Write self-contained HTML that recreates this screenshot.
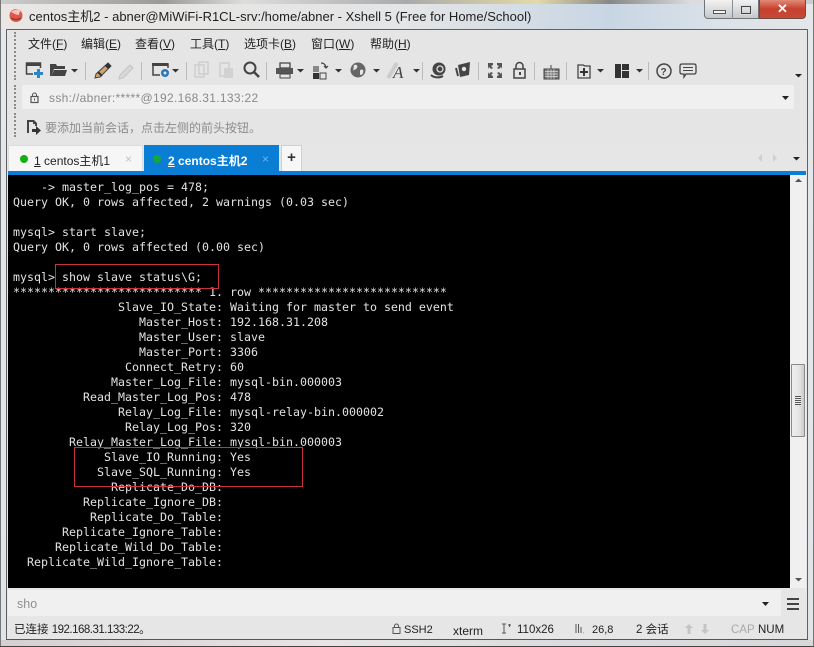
<!DOCTYPE html>
<html><head><meta charset="utf-8">
<style>
html,body{margin:0;padding:0;background:#d8dde2}
#w{position:relative;width:814px;height:647px;overflow:hidden;font-family:"Liberation Sans","Noto Sans CJK SC",sans-serif;color:#222;
background:linear-gradient(180deg,#d9dcdf 0,#e4e8ec 28px,#dfe4e9 100%)}
.a{position:absolute;white-space:nowrap}
pre{position:absolute;left:13px;top:180px;margin:0;font:11.63px/15px "DejaVu Sans Mono","Liberation Mono",monospace;color:#e2e2e2}
.m{font-size:12px;top:35px;color:#222}
.tb{position:absolute;left:0;top:0}
u{text-decoration:underline}
</style></head><body>
<div id="w">
<!-- glass title -->
<div class="a" style="left:0;top:0;width:814px;height:4px;background:linear-gradient(90deg,#ccc,#999 20%,#ddd 30%,#aaa 50%,#e4d9a8 66%,#888 75%,#ddd 85%,#ccc)"></div>
<div class="a" style="left:0;top:4px;width:814px;height:25px;background:linear-gradient(90deg,#e9e6e4,#e4e5e6 50%,#c8d6e4 75%,#dde3e8 90%,#e4e6e8)"></div>
<svg class="tb" width="30" height="30" style="left:8px;top:7px"><circle cx="8" cy="8.5" r="6.5" fill="#d9594c"/><path d="M3 5c3-3 8-3 11-2-2 1-3 3-3 5-3 0-6-2-8-3z" fill="#f4c4b8"/><path d="M3 11c3 2 7 2 10 0" stroke="#a9352c" stroke-width="1.5" fill="none"/></svg>
<div class="a" style="left:29px;top:6px;font-size:13px;color:#222">centos主机2 - abner@MiWiFi-R1CL-srv:/home/abner - Xshell 5 (Free for Home/School)</div>
<!-- window controls -->
<div class="a" style="left:704px;top:0;width:55px;height:19px;background:linear-gradient(#f2f2f2,#c4c8cc);border:1px solid #6f7478;border-top:0;border-radius:0 0 0 4px;box-sizing:border-box"></div>
<div class="a" style="left:732px;top:0;width:1px;height:19px;background:#8a8f94"></div>
<div class="a" style="left:713px;top:10px;width:11px;height:3px;background:#f4f4f4;border:1px solid #555;box-sizing:content-box;height:2px"></div>
<div class="a" style="left:741px;top:6px;width:8px;height:6px;border:1px solid #444;outline:1px solid #ddd"></div>
<div class="a" style="left:759px;top:0;width:47px;height:19px;background:linear-gradient(#e08a78,#c8402c 50%,#c44a38);border:1px solid #6f4a44;border-top:0;border-radius:0 0 4px 0;box-sizing:border-box;text-align:center;color:#fff;font:bold 13px/17px 'Liberation Sans',sans-serif">✕</div>

<!-- inner frame -->
<div class="a" style="left:6px;top:29px;width:802px;height:611px;background:#e5e5e5;border:1px solid #5e6266;border-bottom:1px solid #555;box-sizing:border-box;border-radius:1px"></div>
<div class="a" style="left:7px;top:30px;width:800px;height:115px;background:#e5e5e5"></div>
<!-- grips -->
<div class="a" style="left:14px;top:32px;height:48px;border-left:2px dotted #8a8a8a"></div>
<div class="a" style="left:14px;top:85px;height:24px;border-left:2px dotted #8a8a8a"></div>
<div class="a" style="left:14px;top:113px;height:24px;border-left:2px dotted #8a8a8a"></div>
<!-- menu -->
<div class="a m" style="left:28px">文件(<u>F</u>)</div>
<div class="a m" style="left:81px">编辑(<u>E</u>)</div>
<div class="a m" style="left:135px">查看(<u>V</u>)</div>
<div class="a m" style="left:190px">工具(<u>T</u>)</div>
<div class="a m" style="left:244px">选项卡(<u>B</u>)</div>
<div class="a m" style="left:311px">窗口(<u>W</u>)</div>
<div class="a m" style="left:370px">帮助(<u>H</u>)</div>
<!-- toolbar -->
<svg class="tb" width="814" height="30" viewBox="0 56 814 30" style="top:56px">
<g fill="#333">
<path d="M33 74h-6.500v-11h14v5" fill="none" stroke="#444" stroke-width="1.500"/><rect x="26" y="63" width="15" height="3" fill="#444"/><path d="M37 69h3v3h3v3h-3v3h-3v-3h-3v-3h3z" fill="#2a87c4"/>
<path d="M50 64h6l1 2h8v3H54l-3 7h-1zM54 70h13l-2 6H51z" fill="#444"/>
<path d="M71 69h7l-3.500 3.500z"/>
<path d="M172 69h7l-3.500 3.500zM297 69h7l-3.500 3.500zM335 69h7l-3.500 3.500zM373 69h7l-3.500 3.500zM413 69h7l-3.500 3.500zM597 69h7l-3.500 3.500zM636 69h7l-3.500 3.500z"/>
</g>
<g fill="#bbb"><rect x="85" y="62" width="1" height="18"/><rect x="141" y="62" width="1" height="18"/><rect x="186" y="62" width="1" height="18"/><rect x="266" y="62" width="1" height="18"/><rect x="422" y="62" width="1" height="18"/><rect x="478" y="62" width="1" height="18"/><rect x="534" y="62" width="1" height="18"/><rect x="566" y="62" width="1" height="18"/><rect x="648" y="62" width="1" height="18"/></g>
<!-- pencil -->
<path d="M96 74l12-11 3 3-11 11-5 1z" fill="#d4a36c" stroke="#444"/><path d="M105 66l3-3 3 3-3 3z" fill="#333"/><path d="M98 72l4 4" stroke="#333" stroke-width="2"/>
<path d="M120 75l10-10 3 3-10 10-4 1z" fill="#d8d8d8" stroke="#c4c4c4"/>
<!-- session props -->
<path d="M160 75h-7V64h15v4" fill="none" stroke="#444" stroke-width="1.500"/><rect x="152" y="63" width="16" height="3" fill="#444"/><circle cx="165" cy="73" r="4" fill="#2a78b8"/><circle cx="165" cy="73" r="1.500" fill="#e5e5e5"/>
<!-- copy/paste disabled -->
<g fill="none" stroke="#cfcfcf" stroke-width="1.500"><rect x="195" y="65" width="9" height="12"/><rect x="199" y="62" width="9" height="12"/><rect x="220" y="63" width="9" height="13"/></g><rect x="224" y="68" width="9" height="10" fill="#d2d2d2"/>
<!-- search -->
<circle cx="250" cy="68" r="5.500" fill="none" stroke="#444" stroke-width="2"/><path d="M254 72l5 5" stroke="#444" stroke-width="2.500"/>
<!-- print -->
<path d="M280 63h10v5h-10z" fill="none" stroke="#444" stroke-width="1.300"/><rect x="276" y="68" width="17" height="6" fill="#555"/><path d="M280 74h10v4h-10z" fill="#e5e5e5" stroke="#444"/>
<!-- transfer -->
<rect x="313" y="66" width="6" height="6" fill="#888"/><rect x="313" y="73" width="6" height="6" fill="#333"/><rect x="320" y="73" width="6" height="6" fill="none" stroke="#444"/><path d="M321 63c3 0 5 2 5 5M324 66l2 2 2-2" fill="none" stroke="#444" stroke-width="1.200"/>
<!-- globe -->
<circle cx="358" cy="70" r="7.500" fill="#666"/><path d="M354 65c3-1 4 1 3 3s-3 1-4 3zM360 70c3-1 4 0 3 3s-3 2-3 1z" fill="#e5e5e5"/>
<!-- font A -->
<path d="M388 78l9-15" stroke="#ccc" stroke-width="4"/>
<text x="393" y="78" font-family="Liberation Serif" font-style="italic" font-size="17" fill="#444">A</text>
<!-- xftp shell / tunnel -->
<circle cx="439" cy="69" r="6.500" fill="#444"/><circle cx="440" cy="69" r="3" fill="none" stroke="#ddd" stroke-width="1.300"/><path d="M431 75c3 3 9 3 12 1" stroke="#444" stroke-width="2" fill="none"/>
<path d="M458 65l12-3-1 13-9 2z" fill="#444"/><circle cx="464" cy="69" r="2.200" fill="#e5e5e5"/><path d="M456 68l2 8" stroke="#444" stroke-width="2"/>
<!-- fullscreen -->
<g fill="#555"><path d="M488 63h5v2l-2 1 2 2-2 1-2-2-1 2zM502 63h-5v2l2 1-2 2 2 1 2-2 1 2zM488 78h5v-2l-2-1 2-2-2-1-2 2-1-2zM502 78h-5v-2l2-1-2-2 2-1 2 2 1-2z"/></g>
<!-- lock -->
<rect x="514" y="69" width="11" height="9" fill="none" stroke="#444" stroke-width="1.500"/><path d="M516 69v-3a3.500 3.500 0 0 1 7 0v3" fill="none" stroke="#444" stroke-width="1.500"/><rect x="519" y="72" width="2" height="3" fill="#444"/>
<!-- keyboard -->
<rect x="544" y="69" width="15" height="10" fill="#777" stroke="#444"/><path d="M545 71.500h13M545 74h13M545 76.500h13M548 69v10M551 69v10M554 69v10" stroke="#ddd" stroke-width=".7"/><path d="M551 69v-4" stroke="#444"/>
<!-- new tab group -->
<path d="M578 65h5l2 1h5v12h-12z" fill="none" stroke="#444" stroke-width="1.300"/><path d="M583 68h2v3h3v2h-3v3h-2v-3h-3v-2h3z" fill="#333"/>
<!-- layout -->
<rect x="615" y="64" width="6" height="14" fill="#333"/><rect x="622" y="64" width="7" height="6" fill="#333"/><rect x="622" y="71" width="7" height="7" fill="#333"/>
<!-- help -->
<circle cx="664" cy="71" r="7" fill="none" stroke="#444" stroke-width="1.500"/><text x="660.500" y="75" font-family="Liberation Sans" font-weight="bold" font-size="10" fill="#444">?</text>
<!-- chat -->
<path d="M682 64h12q2 0 2 2v6q0 2-2 2h-8l-2 3v-3h-2q-2 0-2-2v-6q0-2 2-2z" fill="none" stroke="#444" stroke-width="1.300"/><path d="M683 67.500h10M683 70.500h10" stroke="#444"/>
<path d="M795 74h7l-3.500 3.500z" fill="#222"/>
</svg>
<!-- address -->
<div class="a" style="left:22px;top:85px;width:772px;height:24px;background:#f0f0f0"></div>
<svg class="tb" width="14" height="14" style="left:28px;top:91px"><rect x="3" y="5.500" width="7" height="6" fill="none" stroke="#555" stroke-width="1.200"/><path d="M4.500 5.500V4a2 2 0 0 1 4 0v1.500" fill="none" stroke="#555"/><rect x="6" y="7.500" width="1" height="2" fill="#555"/></svg>
<div class="a" style="left:49px;top:91px;font-size:12px;color:#8a8a8a;letter-spacing:.32px">ssh://abner:*****@192.168.31.133:22</div>
<svg class="tb" width="9" height="6" style="left:781px;top:95px"><path d="M1 1h7L4.500 5z" fill="#222"/></svg>
<!-- hint -->
<svg class="tb" width="16" height="16" style="left:26px;top:119px"><path d="M1 1h7l3 3v3H9V5H7V3H3v11H1z" fill="#444"/><path d="M6 10h4V7l5 4.500L10 16v-3H6z" fill="#333"/></svg>
<div class="a" style="left:45px;top:119px;font-size:12px;color:#8c8c8c">要添加当前会话，点击左侧的前头按钮。</div>
<!-- tabs strip -->
<div class="a" style="left:7px;top:145px;width:800px;height:26px;background:#e6e6e6"></div>
<div class="a" style="left:8px;top:145px;width:135px;height:26px;background:#f6f6f6;border:1px solid #dcdcdc;border-bottom:0;box-sizing:border-box"></div>
<div class="a" style="left:144px;top:145px;width:135px;height:27px;background:#0a7ed4"></div>
<div class="a" style="left:281px;top:145px;width:21px;height:26px;background:#f7f7f7;border:1px solid #d0d0d0;border-bottom:0;box-sizing:border-box;text-align:center;font:bold 15px/23px 'Liberation Sans',sans-serif;color:#333">+</div>
<div class="a" style="left:20px;top:155px;width:8px;height:8px;border-radius:50%;background:#12b012"></div>
<div class="a" style="left:34px;top:152px;font-size:12px;color:#222"><u>1</u> centos主机1</div>
<div class="a" style="left:125px;top:152px;font-size:12px;color:#c4c4c4">×</div>
<div class="a" style="left:153px;top:155px;width:8px;height:8px;border-radius:50%;background:#13a83a"></div>
<div class="a" style="left:168px;top:152px;font-size:12px;font-weight:bold;color:#fff"><u>2</u> centos主机2</div>
<div class="a" style="left:262px;top:152px;font-size:12px;color:#6db4ea">×</div>
<svg class="tb" width="50" height="12" style="left:755px;top:152px"><path d="M7 2L3 6l4 4zM18 2l4 4-4 4z" fill="#cfcfcf"/><path d="M38 5h7l-3.500 3.500z" fill="#222"/></svg>
<div class="a" style="left:8px;top:171px;width:798px;height:4px;background:#0a7ed4"></div>
<!-- terminal -->
<div class="a" style="left:8px;top:175px;width:782px;height:413px;background:#000"></div>
<pre>    -&gt; master_log_pos = 478;
Query OK, 0 rows affected, 2 warnings (0.03 sec)

mysql&gt; start slave;
Query OK, 0 rows affected (0.00 sec)

mysql&gt; show slave status\G;
*************************** 1. row ***************************
               Slave_IO_State: Waiting for master to send event
                  Master_Host: 192.168.31.208
                  Master_User: slave
                  Master_Port: 3306
                Connect_Retry: 60
              Master_Log_File: mysql-bin.000003
          Read_Master_Log_Pos: 478
               Relay_Log_File: mysql-relay-bin.000002
                Relay_Log_Pos: 320
        Relay_Master_Log_File: mysql-bin.000003
             Slave_IO_Running: Yes
            Slave_SQL_Running: Yes
              Replicate_Do_DB:
          Replicate_Ignore_DB:
           Replicate_Do_Table:
       Replicate_Ignore_Table:
      Replicate_Wild_Do_Table:
  Replicate_Wild_Ignore_Table:</pre>
<div class="a" style="left:55px;top:264px;width:164px;height:25px;border:1px solid #c8323a;box-sizing:border-box"></div>
<div class="a" style="left:74px;top:447px;width:229px;height:40px;border:1px solid #c8323a;box-sizing:border-box"></div>
<!-- scrollbar -->
<div class="a" style="left:790px;top:175px;width:16px;height:413px;background:#f0f0f0"></div>
<svg class="tb" width="16" height="413" style="left:790px;top:175px"><path d="M5 7l3.500-3.500L12 7z" fill="#555"/><path d="M5 403h7l-3.500 3.500z" fill="#555"/></svg>
<div class="a" style="left:791px;top:364px;width:14px;height:73px;background:linear-gradient(90deg,#eee,#e4e4e4 60%,#ccc);border:1px solid #8a8a8a;box-sizing:border-box;border-radius:1px"></div>
<div class="a" style="left:795px;top:396px;width:6px;height:9px;background:repeating-linear-gradient(#555 0 1px,#eee 1px 2px)"></div>
<!-- input bar -->
<div class="a" style="left:7px;top:588px;width:800px;height:52px;background:#e6e6e6"></div>
<div class="a" style="left:8px;top:590px;width:773px;height:26px;background:#f0f0f0"></div>
<div class="a" style="left:17px;top:597px;font-size:12.500px;color:#8f8f8f">sho</div>
<svg class="tb" width="9" height="6" style="left:761px;top:601px"><path d="M1 1h7L4.500 5z" fill="#222"/></svg>
<div class="a" style="left:787px;top:598px;width:12px;height:2px;background:#444"></div>
<div class="a" style="left:787px;top:603px;width:12px;height:2px;background:#444"></div>
<div class="a" style="left:787px;top:608px;width:12px;height:2px;background:#444"></div>
<!-- status -->
<div class="a" style="left:14px;top:621px;font-size:11.500px;color:#222">已连接 <span style="letter-spacing:-.5px">192.168.31.133:22</span>。</div>
<svg class="tb" width="12" height="12" style="left:391px;top:623px"><rect x="2" y="4.500" width="7" height="6" fill="none" stroke="#555"/><path d="M3.500 4.500V3a2 2 0 0 1 4 0v1.500" fill="none" stroke="#555"/></svg>
<div class="a" style="left:404px;top:624px;font-size:11px">SSH2</div>
<div class="a" style="left:453px;top:624px;font-size:12px">xterm</div>
<svg class="tb" width="14" height="12" style="left:500px;top:623px"><path d="M2 1h4M4 1v9M2 10h4M8 2h3M9.500 1v3" stroke="#555" fill="none"/></svg>
<div class="a" style="left:517px;top:624px;font-size:11.500px">110x26</div>
<svg class="tb" width="12" height="12" style="left:574px;top:623px"><path d="M2 1v9M4.500 1v9M7 4v6M9 10h.5" stroke="#555" fill="none"/></svg>
<div class="a" style="left:592px;top:624px;font-size:11px">26,8</div>
<div class="a" style="left:636px;top:621px;font-size:11.500px">2 会话</div>
<svg class="tb" width="32" height="12" style="left:684px;top:623px"><path d="M5 1L1 5h2.500v6h3V5H9zM21 11l4-4h-2.500V1h-3v6H17z" fill="#c4c4c4"/></svg>
<div class="a" style="left:731px;top:624px;font-size:11.500px;color:#a8a8a8">CAP</div>
<div class="a" style="left:758px;top:624px;font-size:11.500px;color:#222">NUM</div>
<!-- bottom frame -->
<div class="a" style="left:0;top:640px;width:814px;height:7px;background:linear-gradient(90deg,#d4d0d0,#e8e4e4 40%,#dadcdf 70%,#d6d8da)"></div>
<div class="a" style="left:6px;top:639px;width:802px;height:1px;background:#555"></div>
<div class="a" style="left:0;top:0;width:1px;height:647px;background:#777"></div>
<div class="a" style="left:813px;top:0;width:1px;height:647px;background:#777"></div>
<div class="a" style="left:0;top:646px;width:814px;height:1px;background:#444"></div>
</div>
</body></html>
